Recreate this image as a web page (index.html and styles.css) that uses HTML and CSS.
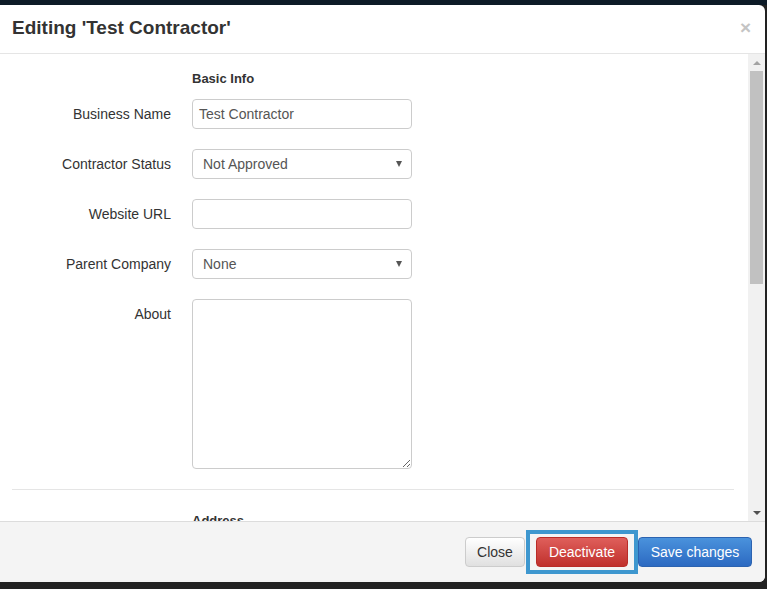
FILE: index.html
```html
<!DOCTYPE html>
<html>
<head>
<meta charset="utf-8">
<link rel="stylesheet" href="styles.css">
</head>
<body>
<div class="backdrop-top"></div>
<div class="modal">
  <div class="modal-header">
    <h4 class="modal-title">Editing 'Test Contractor'</h4>
    <span class="close">×</span>
  </div>
  <div class="modal-body-wrap">
    <div class="modal-body">
      <div class="row">
        <div class="label"></div>
        <div class="section-title">Basic Info</div>
      </div>
      <div class="row">
        <div class="label">Business Name</div>
        <div class="input">Test Contractor</div>
      </div>
      <div class="row">
        <div class="label">Contractor Status</div>
        <div class="input select"><span>Not Approved</span><span class="caret"></span></div>
      </div>
      <div class="row">
        <div class="label">Website URL</div>
        <div class="input"></div>
      </div>
      <div class="row">
        <div class="label">Parent Company</div>
        <div class="input select"><span>None</span><span class="caret"></span></div>
      </div>
      <div class="row">
        <div class="label">About</div>
        <div class="input textarea">
          <svg class="grip" width="8" height="8" viewBox="0 0 8 8"><path d="M8 1L1 8M8 5L5 8" stroke="#666" stroke-width="1"/></svg>
        </div>
      </div>
      <hr class="divider">
      <div class="row">
        <div class="label"></div>
        <div class="section-title">Address</div>
      </div>
    </div>
    <div class="scrollbar">
      <div class="arrow up"></div>
      <div class="track"><div class="thumb"></div></div>
      <div class="arrow down"></div>
    </div>
  </div>
  <div class="modal-footer">
    <button class="btn btn-default">Close</button>
    <div class="highlight"><button class="btn btn-danger">Deactivate</button></div>
    <button class="btn btn-primary">Save changes</button>
  </div>
</div>
<div class="backdrop-bottom"></div>
</body>
</html>
```
FILE: styles.css
```css
* { box-sizing: border-box; }
html, body { margin: 0; padding: 0; }
body {
  width: 767px;
  height: 589px;
  overflow: hidden;
  background: #222;
  font-family: "Liberation Sans", Arial, sans-serif;
  font-size: 14px;
  color: #333;
}
.backdrop-top { height: 5px; background: #0d1b27; }
.backdrop-bottom { height: 7px; background: #222; }
.modal {
  width: 765px;
  height: 577px;
  background: #fff;
  border-radius: 0 6px 6px 0;
  display: flex;
  flex-direction: column;
  overflow: hidden;
}
.modal-header {
  height: 49px;
  border-bottom: 1px solid #e5e5e5;
  display: flex;
  align-items: center;
  justify-content: space-between;
  padding: 0 14px 0 12px;
  flex: none;
}
.modal-title {
  margin: -2px 0 0 0;
  font-size: 19px;
  font-weight: bold;
  color: #333;
}
.close {
  font-size: 19px;
  font-weight: bold;
  color: #c4c4c4;
  line-height: 1;
  margin-top: -4px;
}
.modal-body-wrap {
  flex: 1;
  display: flex;
  overflow: hidden;
  min-height: 0;
}
.modal-body {
  flex: 1;
  overflow: hidden;
  padding: 16px 14px 0 12px;
}
.row {
  display: flex;
  margin-bottom: 20px;
}
.label {
  width: 159px;
  text-align: right;
  padding-top: 7px;
  margin-right: 21px;
  color: #333;
  font-size: 14px;
  flex: none;
}
.row:first-child { margin-bottom: 11px; }
.row:first-child .label { padding-top: 0; }
.section-title {
  font-size: 13px;
  font-weight: bold;
  line-height: 18px;
  color: #333;
}
.input {
  width: 220px;
  height: 30px;
  border: 1px solid #ccc;
  border-radius: 4px;
  padding: 6px 6px;
  font-size: 14px;
  line-height: 16px;
  color: #555;
  display: flex;
  align-items: center;
}
.input.select { justify-content: space-between; padding-left: 10px; padding-right: 9px; }
.caret {
  width: 0; height: 0;
  border-left: 3px solid transparent;
  border-right: 3px solid transparent;
  border-top: 6px solid #555;
}
.input.textarea {
  height: 170px;
  position: relative;
}
.grip { position: absolute; right: 1px; bottom: 1px; }
.divider {
  border: 0;
  border-top: 1px solid #e5e5e5;
  margin: 0 0 22px 0;
}
.scrollbar {
  width: 17px;
  flex: none;
  background: #f1f1f1;
  display: flex;
  flex-direction: column;
  align-items: center;
}
.arrow { height: 17px; width: 17px; display: flex; align-items: center; justify-content: center; }
.arrow.up::after {
  content: ""; border-left: 4px solid transparent; border-right: 4px solid transparent; border-bottom: 4px solid #a3a3a3;
}
.arrow.down::after {
  content: ""; border-left: 4px solid transparent; border-right: 4px solid transparent; border-top: 4px solid #505050;
}
.track { flex: 1; width: 100%; padding: 0 2px; }
.thumb { height: 213px; background: #c1c1c1; }
.modal-footer {
  height: 61px;
  flex: none;
  background: #f4f4f4;
  border-top: 1px solid #dcdcdc;
  display: flex;
  justify-content: flex-end;
  align-items: center;
  padding: 0 13px 0 0;
}
.btn {
  height: 30px;
  padding: 0 12px;
  font-family: "Liberation Sans", Arial, sans-serif;
  font-size: 14px;
  border-radius: 4px;
  border: 1px solid transparent;
  line-height: 28px;
  margin: 0;
}
.btn-default {
  background: linear-gradient(#fff, #e0e0e0);
  border-color: #ccc;
  color: #333;
  width: 60px;
  padding: 0;
}
.highlight {
  border: 4px solid #3e97cf;
  padding: 3px 6px;
  margin: 0 0 0 1px;
}
.btn-danger {
  background: linear-gradient(#df5f5b, #c0302c);
  border-color: #b92c28;
  color: #fff;
  width: 92px;
  padding: 0;
}
.btn-primary {
  background: linear-gradient(#4a92dc, #2c6ac2);
  border-color: #2c63b0;
  color: #fff;
  width: 114px;
  padding: 0;
}
```
